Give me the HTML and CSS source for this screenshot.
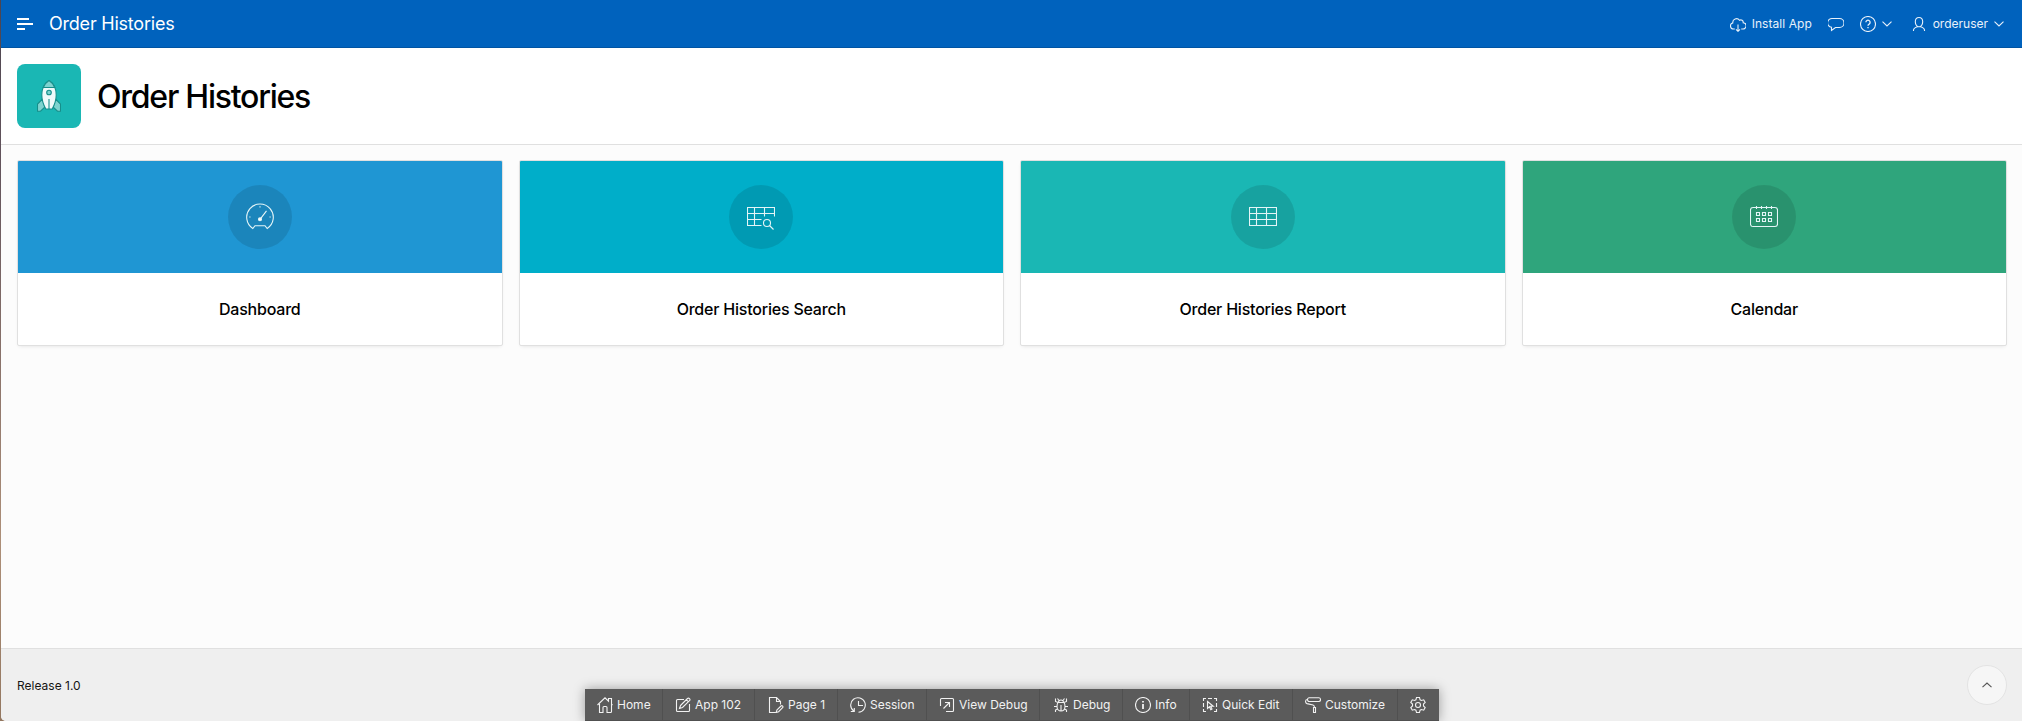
FILE: index.html
```html
<!DOCTYPE html>
<html lang="en">
<head>
<meta charset="utf-8">
<title>Order Histories</title>
<link rel="stylesheet" href="styles.css">
</head>
<body>
<div class="page">
<header class="header">
  <svg class="menu" width="16" height="14" viewBox="0 0 16 14"><path d="M0 2h12M0 7h16M0 12h8" stroke-width="2"/></svg>
  <span class="brand">Order Histories</span>
  <nav class="nav">
    <a class="install"><svg class="icon" viewBox="0 0 16 16"><path d="M4.800 13H3.600A3.100 3.100 0 0 1 2.800 6.900A3.700 3.700 0 0 1 9.500 4.300a2.400 2.400 0 0 1 3.700 2.400 2.900 2.900 0 0 1-.5 6.300h-1.500M8 8.500v7M6 13.300l2 2 2-2"/></svg><span class="install-text">Install App</span></a>
    <a class="chat"><svg class="icon" viewBox="0 0 16 16"><path d="M4.500 2.500h7a4 4 0 0 1 0 9H7.500L3.500 14.500V11.300A4.400 4.400 0 0 1 4.500 2.500Z"/></svg></a>
    <a class="help"><svg class="icon" viewBox="0 0 16 16"><circle cx="8" cy="8" r="7.500"/><path d="M5.900 6.300a2.100 2.100 0 1 1 3.200 1.800Q8 8.700 8 9.800M8 11v1.300" stroke-width="1.300"/></svg><svg class="chev" viewBox="0 0 10 6"><path d="M.5.7 5 5 9.500.7"/></svg></a>
    <a class="user"><svg class="icon" viewBox="0 0 16 16"><path d="M2.500 15v-.8c0-2 1.700-2.700 4-3.400M13.500 15v-.8c0-2-1.700-2.700-4-3.400M8 1.500C5.600 1.500 4.300 3.200 4.300 5.700S5.800 10.800 8 10.800s3.700-2.600 3.700-5.100S10.400 1.500 8 1.500Z"/></svg><span class="user-text">orderuser</span><svg class="chev" viewBox="0 0 10 6"><path d="M.5.7 5 5 9.500.7"/></svg></a>
  </nav>
</header>
<section class="hero">
  <div class="app-icon"><svg width="24" height="32" viewBox="0 0 24 32"><path d="M5.500 19 .5 24v7.200h3L8 27ZM18.500 19l5 5v7.200h-3L16 27Z" fill="#7ed3cf"/><path d="M12 .5C8 3 4.800 8 4.800 15c0 5 1.500 9.500 4 14h6.400c2.500-4.500 4-9 4-14C19.200 8 16 3 12 .5Z" fill="#effafa"/><path d="M12 .5C9.500 2 7.500 4.500 6.300 7.500h11.400C16.500 4.500 14.500 2 12 .5Z" fill="#7ed3cf"/><circle cx="12" cy="12.500" r="2.300" fill="#7ed3cf"/><path d="M12 19v10"/></svg></div>
  <h1 class="title">Order Histories</h1>
</section>
<main class="cards">
  <article class="card"><div class="banner blue"><div class="disc"><svg viewBox="0 0 28 28"><path d="M6.800 25.500A13.300 13.300 0 1 1 21.200 25.500L19 22.700H9Z"/><path d="m14 16.300 6.500-8.500M14 3.200v1.200M3.300 14h1.200M23.500 14h1.200"/><circle cx="14" cy="16.300" r="1.500" fill="#fff"/></svg></div></div><h2 class="label">Dashboard</h2></article>
  <article class="card"><div class="banner cyan"><div class="disc"><svg viewBox="0 0 28 28"><path d="M14.500 22.500h-14v-18h27v9M.5 10.500h27M.5 16.500h14M7.500 4.500v18M17.500 4.500v9"/><circle cx="20" cy="20" r="3.500"/><path d="m22.500 22.500 4 4"/></svg></div></div><h2 class="label">Order Histories Search</h2></article>
  <article class="card"><div class="banner teal"><div class="disc"><svg viewBox="0 0 28 28"><path d="M.5 4.500h27v18H.5ZM.5 10.500h27M.5 16.500h27M7.500 4.500v18M17.500 4.500v18"/></svg></div></div><h2 class="label">Order Histories Report</h2></article>
  <article class="card"><div class="banner green"><div class="disc"><svg viewBox="0 0 28 28"><rect x=".5" y="4.500" width="27" height="19" rx="2.500"/><path d="M6.500 3v3M11.500 3v3M16.500 3v3M21.500 3v3M6.500 9.500h3v3h-3ZM12.500 9.500h3v3h-3ZM18.500 9.500h3v3h-3ZM6.500 15.500h3v3h-3ZM12.500 15.500h3v3h-3ZM18.500 15.500h3v3h-3Z"/></svg></div></div><h2 class="label">Calendar</h2></article>
</main>
<footer class="footer"><span class="release">Release 1.0</span><a class="to-top"><svg class="chev" viewBox="0 0 10 6"><path d="M.5 5.200 5 1 9.500 5.200"/></svg></a></footer>
</div>
<div class="toolbar">
  <a class="tool w-home"><svg class="icon" viewBox="0 0 16 16"><path d="M.5 8 8 .8l3.500 3.400V1.500h3v5.600l1 .9M2.500 7v8.500h3.500V10.500q0-1 1-1h2q1 0 1 1v5h3.500q1 0 1-1V7"/></svg><span>Home</span></a>
  <a class="tool w-app"><svg class="icon" viewBox="0 0 16 16"><path d="M9 2.500H2.500q-1 0-1 1v10q0 1 1 1h11q1 0 1-1V7M5.500 8.500 12.500 1.500q1-.8 2 .2t0 2L7.500 10.500l-3 1ZM11.500 2.800l2 2"/></svg><span>App 102</span></a>
  <a class="tool w-page"><svg class="icon" viewBox="0 0 16 16"><path d="M7.500 15.500h-6V.5h7l4 4v3M8.500.5v4h4M9 12.800l4-3.800q.8-.7 1.600.1t0 1.600l-4 4-2.500.8Z"/></svg><span>Page 1</span></a>
  <a class="tool w-session"><svg class="icon" viewBox="0 0 16 16"><path d="M3.800 14A7.300 7.300 0 1 1 8.500 15.300M.8 14.500h3.500V11M8.500 4v4.500h4.500"/></svg><span>Session</span></a>
  <a class="tool w-view"><svg class="icon" viewBox="0 0 16 16"><path d="M1.500 9V2.500q0-1 1-1h11q1 0 1 1v11q0 1-1 1H7M4.500 11.500l6-6M6 5.500h4.500V10"/></svg><span>View Debug</span></a>
  <a class="tool w-debug"><svg class="icon" viewBox="0 0 16 16"><path d="M5 5.500h6q1 1.500 1 4c0 2.500-1.500 4.500-4 4.500s-4-2-4-4.500q0-2.500 1-4ZM5.500 5.500a2.500 2.500 0 0 1 5 0M5 5.500 2.500 4.500V1.500M11 5.500l2.500-1V1.500M1 9.500h3M12 9.500h3M4.500 12l-2 1v2M11.500 12l2 1v2M8 8v6M4.500 1.500l1.500 2M11.500 1.500 10 3.500"/></svg><span>Debug</span></a>
  <a class="tool w-info"><svg class="icon" viewBox="0 0 16 16"><circle cx="8" cy="8" r="7.500"/><path d="M8 7v5M8 4v1.600" stroke-width="1.800"/></svg><span>Info</span></a>
  <a class="tool w-quick"><svg class="icon" viewBox="0 0 16 16"><path d="M1.500 4V1.500H4M6 1.500h4M12 1.500h2.500V4M14.500 6v4M14.500 12v2.500H12M4 14.500H1.500V12M1.500 10V6M5.500 4.500v7l2-1.800 1.300 3 1.200-.6-1.300-2.800h2.600Z"/></svg><span>Quick Edit</span></a>
  <a class="tool w-custom"><svg class="icon" viewBox="0 0 16 16"><rect x="2.500" y=".8" width="13" height="3.700" rx="1.700"/><path d="M2.500 2.500C0 2.500 0 6 2 6.600L8 8q1.500.5 1.500 2.500M8.500 10.500h2v5h-2Z"/></svg><span>Customize</span></a>
  <a class="tool w-gear"><svg class="icon" viewBox="0 0 16 16"><path d="M6.500.5h3l.6 2.300 1.300.7 2.300-.7 1.500 2.600-1.700 1.700v1.800l1.700 1.700-1.500 2.600-2.300-.7-1.300.7-.6 2.300h-3l-.6-2.300-1.300-.7-2.300.7L.8 10.600l1.700-1.700V7.100L.8 5.400l1.500-2.600 2.300.7 1.300-.7Z"/><circle cx="8" cy="8" r="2.500"/></svg></a>
</div>
</body>
</html>
```
FILE: styles.css
```css
* { box-sizing: border-box; }
body {
  margin: 0;
  height: 721px;
  padding-left: 1px;
  overflow: hidden;
  background: linear-gradient(#4c4550 0%, #63545c 23%, #ad8f78 75%, #937760 100%);
  font-family: Inter, "Liberation Sans", sans-serif;
  font-size: 12px;
  color: #161513;
}
svg { display: block; flex: none; fill: none; stroke: currentColor; stroke-width: 1.1; }
.app-icon svg { stroke: #158f8b; }
.page {
  height: 721px;
  display: flex;
  flex-direction: column;
  background: #fcfcfc;
  border-bottom-left-radius: 5px;
  overflow: hidden;
}
.header {
  height: 48px;
  flex: none;
  display: flex;
  align-items: center;
  padding: 0 18px 0 16px;
  background: #0062bd;
  border-bottom: 1px solid #0054a3;
  color: #fff;
}
.brand { margin-left: 16px; font-size: 18px; line-height: 24px; letter-spacing: -0.22px; }
.nav { margin-left: auto; display: flex; align-items: center; color: #e8f1fa; }
.nav a { display: flex; align-items: center; }
.icon { width: 16px; height: 16px; }
.chev { width: 10px; height: 6px; }
.install { width: 98px; gap: 6px; }
.install-text { letter-spacing: 0.06px; }
.chat { width: 32px; }
.help { width: 51px; gap: 6px; }
.user { gap: 6px; }
.hero {
  height: 97px;
  flex: none;
  display: flex;
  align-items: center;
  gap: 16px;
  padding: 0 16px;
  background: #fff;
  border-bottom: 1px solid #e0e0e0;
}
.app-icon {
  width: 64px;
  height: 64px;
  border-radius: 8px;
  background: #1ab7b4;
  display: flex;
  align-items: center;
  justify-content: center;
}
.title { margin: 0; padding-top: 2px; font-size: 32px; line-height: 40px; font-weight: 500; letter-spacing: -1.24px; color: #000; }
.cards {
  flex: 1;
  display: grid;
  grid-template-columns: repeat(4, 1fr);
  align-items: start;
  gap: 16px;
  padding: 15px 15px 0 16px;
}
.card {
  height: 186px;
  border: 1px solid #e0e0e0;
  border-radius: 2px;
  overflow: hidden;
  background: #fff;
  box-shadow: 0 2px 4px -2px rgba(0, 0, 0, .12);
}
.banner { height: 112px; display: flex; align-items: center; justify-content: center; }
.blue { background: #1f96d3; }
.cyan { background: #00aec9; }
.teal { background: #1ab7b4; }
.green { background: #2fa57c; }
.disc {
  width: 64px;
  height: 64px;
  border-radius: 50%;
  background: rgba(0, 0, 0, .11);
  display: flex;
  align-items: center;
  justify-content: center;
  color: #e4f5f7;
}
.disc svg { width: 28px; height: 28px; }
.label {
  margin: 0;
  padding-top: 24px;
  font-size: 16px;
  line-height: 24px;
  font-weight: 500;
  text-align: center;
  letter-spacing: -0.21px;
  color: #000;
}
.footer {
  height: 73px;
  flex: none;
  display: flex;
  align-items: center;
  justify-content: space-between;
  padding: 0 15px 0 16px;
  background: #efefef;
  border-top: 1px solid #e0e0e0;
}
.to-top {
  width: 40px;
  height: 40px;
  border: 1px solid #e3e3e3;
  border-radius: 50%;
  background: #f6f6f6;
  color: #555;
  display: flex;
  align-items: center;
  justify-content: center;
}
.toolbar {
  position: absolute;
  left: 585px;
  bottom: 0;
  width: 854px;
  height: 32px;
  display: flex;
  background: #5b5b5b;
  box-shadow: 0 0 12px rgba(0, 0, 0, .35);
  color: #f2f2f2;
}
.tool {
  display: flex;
  align-items: center;
  gap: 4px;
  padding-left: 12px;
  border-right: 1px solid #505050;
  border-bottom: 1px solid #505050;
  white-space: nowrap;
}
.tool:last-child { border-right: 0; }
.w-home { width: 78px; }
.w-app { width: 92px; }
.w-page { width: 83px; padding-left: 13px; }
.w-session { width: 89px; }
.w-view { width: 113px; }
.w-debug { width: 83px; padding-left: 13px; }
.w-info { width: 67px; }
.w-quick { width: 103px; }
.w-custom { width: 105px; }
.w-gear { width: 41px; }
```
